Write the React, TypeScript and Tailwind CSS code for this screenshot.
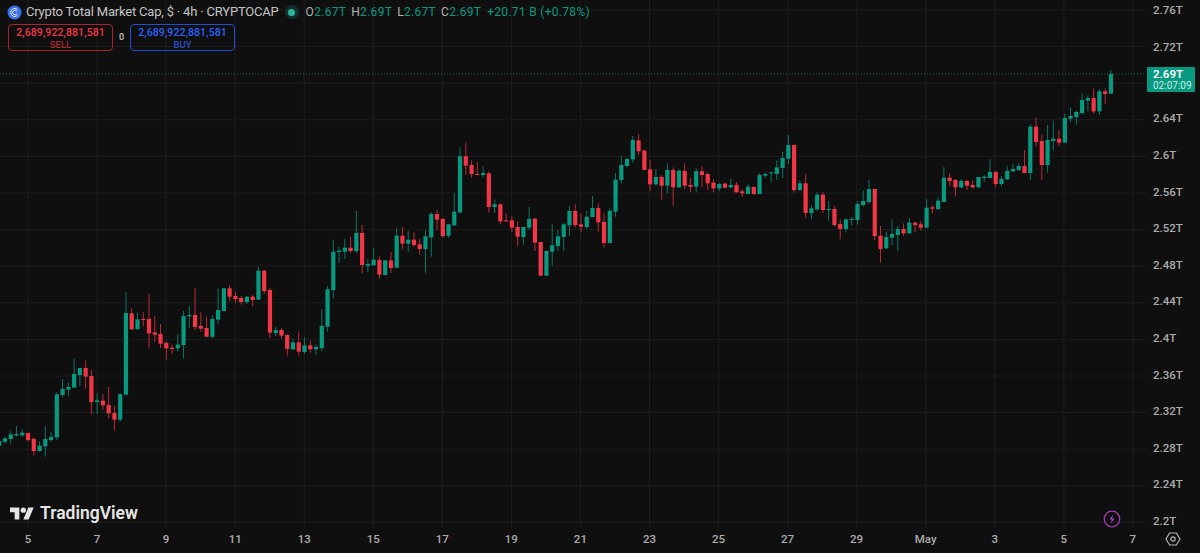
import React from 'react';

type Candle = [number, number, number, number, number]; // up, wick top, body top, body bottom, wick bottom

const G = 1;
const R = 0;

// values are measured at 3x, `top` is the y offset of each block
const blocks: { top: number; rows: Candle[] }[] = [
  {
    top: 280,
    rows: [
      [G, 478, 483, 497, 500], [G, 470, 475, 485, 491], [G, 453, 463, 477, 491], [G, 438, 462, 466, 470],
      [G, 448, 458, 466, 470], [R, 458, 459, 480, 485], [R, 472, 477, 513, 527], [G, 483, 497, 513, 515],
      [G, 438, 477, 499, 530], [G, 456, 471, 480, 486], [G, 337, 343, 472, 480], [G, 297, 327, 345, 352],
      [G, 307, 321, 329, 348], [G, 237, 282, 323, 323], [G, 264, 264, 285, 318], [R, 241, 264, 290, 326],
      [R, 270, 288, 366, 403], [G, 340, 361, 366, 402], [R, 342, 362, 376, 390], [R, 321, 375, 400, 414],
      [R, 378, 399, 419, 451], [G, 339, 343, 419, 425], [G, 36, 99, 344, 344], [R, 85, 100, 148, 149],
      [G, 97, 118, 148, 148], [R, 96, 117, 120, 140], [R, 42, 117, 160, 205], [R, 108, 157, 164, 186],
      [R, 132, 162, 191, 204], [R, 184, 189, 205, 239], [R, 195, 203, 207, 222], [G, 163, 194, 205, 215],
      [G, 93, 108, 195, 236], [G, 78, 105, 109, 143], [R, 25, 105, 141, 150],
    ],
  },
  {
    top: 200,
    rows: [
      [R, 337, 378, 386, 395], [R, 350, 384, 410, 411], [G, 345, 357, 410, 414], [G, 265, 330, 359, 371],
      [G, 264, 265, 333, 334], [R, 255, 265, 290, 303], [R, 275, 288, 297, 310], [R, 288, 294, 306, 314],
      [G, 288, 290, 306, 312], [R, 284, 290, 300, 318], [G, 201, 212, 299, 300], [R, 210, 212, 273, 282],
      [R, 264, 270, 398, 414], [G, 381, 390, 399, 408], [R, 384, 390, 407, 416], [R, 403, 405, 447, 467],
      [G, 416, 427, 448, 450], [R, 395, 427, 455, 467], [G, 412, 436, 456, 462], [R, 421, 436, 448, 458],
      [G, 433, 441, 448, 465], [G, 327, 378, 444, 453], [G, 258, 268, 380, 395], [G, 119, 155, 270, 294],
      [G, 140, 152, 156, 189], [G, 117, 143, 155, 177], [R, 111, 143, 153, 158], [G, 33, 99, 153, 159],
      [R, 75, 99, 195, 219], [G, 177, 192, 197, 216], [G, 145, 179, 196, 196], [R, 170, 180, 224, 237],
      [G, 180, 181, 225, 226], [R, 156, 181, 204, 219], [G, 85, 107, 203, 205],
    ],
  },
  {
    top: 130,
    rows: [
      [R, 291, 317, 341, 358], [G, 303, 329, 341, 365], [R, 307, 329, 345, 351], [R, 326, 343, 357, 375],
      [G, 300, 319, 357, 430], [G, 247, 252, 322, 380], [R, 240, 252, 269, 300], [R, 265, 267, 318, 323],
      [G, 281, 283, 317, 323], [G, 189, 245, 286, 287], [G, 52, 79, 247, 251], [R, 38, 79, 107, 134],
      [R, 91, 105, 132, 143], [R, 96, 132, 134, 135], [G, 110, 129, 135, 141], [R, 124, 130, 231, 247],
      [G, 208, 223, 231, 249], [R, 220, 223, 274, 283], [R, 250, 271, 274, 275], [R, 260, 271, 293, 306],
      [R, 274, 291, 320, 348], [G, 291, 291, 321, 344], [G, 231, 267, 293, 300], [R, 264, 266, 338, 363],
      [R, 336, 336, 437, 437], [G, 361, 363, 437, 437], [G, 283, 346, 365, 408], [G, 300, 319, 348, 363],
      [G, 280, 283, 321, 363], [G, 228, 243, 286, 318], [R, 223, 243, 285, 292], [R, 250, 283, 290, 307],
      [G, 243, 260, 291, 297], [G, 198, 234, 261, 262], [R, 220, 234, 277, 305],
      [R, 250, 276, 339, 353], [G, 235, 243, 339, 339], [G, 129, 149, 245, 260], [G, 77, 105, 150, 160],
      [G, 83, 87, 108, 112], [G, 18, 30, 88, 98], [R, 13, 31, 64, 76], [R, 58, 62, 120, 120],
      [R, 91, 118, 163, 182], [G, 117, 141, 163, 166], [R, 135, 141, 167, 209], [G, 100, 120, 167, 190],
      [R, 112, 120, 172, 228], [G, 118, 122, 172, 174], [R, 100, 123, 167, 177], [R, 144, 165, 170, 186],
      [G, 115, 124, 170, 188], [R, 108, 124, 135, 172], [R, 128, 132, 160, 180], [R, 148, 158, 175, 187],
      [G, 158, 162, 175, 184], [R, 158, 161, 173, 175], [G, 147, 165, 172, 174], [R, 156, 165, 187, 188],
      [R, 178, 184, 190, 201], [G, 163, 170, 192, 192], [R, 170, 171, 192, 195], [G, 130, 135, 192, 192],
      [G, 127, 132, 137, 143], [G, 125, 127, 130, 158], [G, 91, 112, 132, 150], [G, 65, 84, 114, 144],
      [G, 15, 45, 86, 103], [R, 43, 45, 180, 188],
      [G, 151, 160, 180, 183], [R, 132, 160, 249, 264], [G, 225, 235, 249, 267], [G, 187, 194, 238, 242],
      [R, 187, 194, 240, 249], [G, 213, 237, 240, 272], [R, 228, 237, 285, 290], [R, 268, 282, 297, 327],
      [G, 265, 268, 297, 306], [G, 262, 267, 270, 286], [G, 213, 222, 270, 284], [G, 182, 213, 225, 230],
      [G, 150, 177, 216, 221], [R, 177, 177, 318, 330], [R, 288, 317, 357, 398], [G, 305, 321, 355, 357],
      [G, 268, 312, 323, 345], [G, 287, 297, 315, 362], [R, 280, 297, 310, 318], [G, 264, 278, 310, 312],
      [R, 276, 278, 285, 307], [R, 274, 283, 293, 302], [G, 207, 233, 293, 293], [R, 226, 232, 236, 251],
      [G, 202, 212, 237, 240], [G, 111, 143, 216, 216], [R, 129, 143, 153, 168], [R, 147, 150, 172, 199],
      [G, 147, 153, 172, 174], [R, 150, 153, 167, 180], [R, 151, 165, 172, 175], [G, 141, 141, 172, 174],
    ],
  },
  {
    top: 60,
    rows: [
      [G, 345, 350, 354, 365], [G, 298, 336, 354, 354], [R, 332, 336, 372, 382], [G, 348, 357, 372, 378],
      [G, 318, 333, 358, 360], [G, 312, 327, 334, 336], [G, 310, 318, 330, 333], [R, 270, 318, 339, 340],
      [G, 193, 200, 339, 360], [R, 174, 200, 246, 260], [R, 224, 243, 315, 360], [G, 195, 240, 315, 338],
      [G, 183, 236, 243, 272], [R, 210, 236, 248, 258], [G, 160, 174, 248, 248], [G, 142, 168, 176, 186],
      [G, 152, 156, 171, 194], [G, 101, 120, 159, 164], [G, 105, 114, 122, 154], [R, 85, 114, 154, 161],
      [G, 87, 94, 154, 164], [R, 85, 94, 102, 132], [G, 30, 42, 101, 101],
    ],
  },
];

const candles = blocks.flatMap((b) =>
  b.rows.map(([up, wt, bt, bb, wb]) => ({
    up: up === G,
    wickTop: b.top + wt / 3,
    bodyTop: b.top + bt / 3,
    bodyBottom: b.top + bb / 3,
    wickBottom: b.top + wb / 3,
  })),
);

// 2.68T sits behind the last price tag, so its row stays empty
const prices = ['2.76T', '2.72T', '', '2.64T', '2.6T', '2.56T', '2.52T', '2.48T', '2.44T', '2.4T', '2.36T', '2.32T', '2.28T', '2.24T', '2.2T'];
const days = ['5', '7', '9', '11', '13', '15', '17', '19', '21', '23', '25', '27', '29', 'May', '3', '5', '7'];

function Chart() {
  return (
    <svg width="1146" height="528" className="block">
      {prices.map((p, k) => (
        <line key={k} x1="0" x2="1146" y1={10 + 36.6 * k} y2={10 + 36.6 * k} stroke="#1d1d1d" />
      ))}
      {days.map((d, k) => (
        <line key={k} y1="0" y2="528" x1={28 + 69.06 * k} x2={28 + 69.06 * k} stroke="#1d1d1d" />
      ))}
      <line x1="0" x2="1146" y1="74" y2="74" stroke="#089981" strokeDasharray="1 2" opacity="0.7" />
      {candles.map((c, k) => {
        const x = 5 + 5.76 * (k - 1);
        const fill = c.up ? '#089981' : '#f23645';
        return (
          <g key={k} fill={fill}>
            <rect x={x - 0.5} width="1" y={c.wickTop} height={c.wickBottom - c.wickTop} opacity="0.75" />
            <rect x={x - 2.1} width="4.2" y={c.bodyTop} height={Math.max(c.bodyBottom - c.bodyTop, 1)} />
          </g>
        );
      })}
    </svg>
  );
}

function OrderBox({ label, tone }: { label: string; tone: 'sell' | 'buy' }) {
  const sell = tone === 'sell';
  return (
    <div
      className={`flex h-[27px] w-[105px] flex-col items-center justify-center rounded-[4px] border ${
        sell ? 'border-[#a8232e]' : 'border-[#1d4ed0]'
      }`}
    >
      <span className={`text-[10.5px] leading-[13px] font-medium tracking-[0.1px] ${sell ? 'text-[#f23645]' : 'text-[#2962ff]'}`}>
        2,689,922,881,581
      </span>
      <span className={`text-[9.5px] leading-[11px] font-medium ${sell ? 'text-[#b0252f]' : 'text-[#2350c8]'}`}>{label}</span>
    </div>
  );
}

function Legend() {
  const ohlc = [
    ['O', '2.67T'],
    ['H', '2.69T'],
    ['L', '2.67T'],
    ['C', '2.69T'],
  ];
  return (
    <div className="absolute top-[4px] left-[7px] flex flex-col gap-[4px]">
      <div className="flex h-[16px] items-center">
        <svg width="15" height="15" viewBox="0 0 15 15" className="mr-[4px]">
          <circle cx="7.5" cy="7.5" r="7" fill="#3b6fe8" />
          <path d="M10.8 5a4 4 0 1 0 0 5M9.8 6.4a2.2 2.2 0 1 0 0 2.2" fill="none" stroke="#e8eefc" strokeWidth="1" />
        </svg>
        <span className="text-[13px] tracking-[-0.19px] text-[#c4c4c4]">Crypto Total Market Cap, $ · 4h · CRYPTOCAP</span>
        <span className="mx-[6px] flex h-[14px] w-[14px] items-center justify-center rounded-full bg-[#12302b]">
          <span className="h-[7px] w-[7px] rounded-full bg-[#2bb39b]" />
        </span>
        <div className="ml-[1px] flex gap-[5px] text-[12px] tracking-[0.3px]">
          {ohlc.map(([k, v]) => (
            <span key={k} className="text-[#089981]">
              <span className="text-[#b4b4b4]">{k}</span>
              {v}
            </span>
          ))}
          <span className="ml-[1px] text-[#089981]">+20.71 B (+0.78%)</span>
        </div>
      </div>
      <div className="ml-[1px] flex items-center">
        <OrderBox label="SELL" tone="sell" />
        <span className="w-[17px] text-center text-[9px] font-medium text-[#c4c4c4]">0</span>
        <OrderBox label="BUY" tone="buy" />
      </div>
    </div>
  );
}

function Logo() {
  return (
    <div className="absolute top-[503px] left-[10px] flex items-center gap-[6px]">
      <svg width="24" height="13" viewBox="0 4 36 18" fill="#e6e6e6">
        <path d="M14 22H7V11H0V4h14v18zM28 22h-8l7.5-18h8L28 22z" />
        <circle cx="20" cy="8" r="4" />
      </svg>
      <span className="text-[17.5px] leading-[20px] font-semibold text-[#e6e6e6]">TradingView</span>
    </div>
  );
}

export default function App() {
  return (
    <div className="flex h-[553px] w-[1200px] flex-col overflow-hidden bg-[#0f0f0f] font-['Roboto',sans-serif]">
      <div className="relative flex h-[528px]">
        <div className="w-[1146px]">
          <Chart />
        </div>
        <div className="flex w-[54px] flex-col gap-[22.6px] pt-[3px] pl-[7px] text-[11.5px] leading-[14px] font-medium text-[#ababab]">
          {prices.map((p, k) => (
            <span key={k} className="h-[14px]">
              {p}
            </span>
          ))}
        </div>

        <Legend />
        <Logo />

        {/* last price tag */}
        <div className="absolute top-[67px] left-[1147px] flex h-[25px] w-[48px] flex-col justify-center rounded-[1px] bg-[#089981] pl-[6px] leading-[12px]">
          <span className="text-[11.5px] font-semibold text-white">2.69T</span>
          <span className="text-[10px] text-[#c8ece5]">02:07:09</span>
        </div>

        {/* alert badge */}
        <svg width="18" height="18" viewBox="0 0 18 18" className="absolute top-[510px] left-[1103px]">
          <circle cx="9" cy="9" r="7.8" fill="none" stroke="#a13bb5" strokeWidth="1.3" />
          <path d="M10.2 4.6 6.2 9.6h2.6l-1 3.8 4-5h-2.6z" fill="#a13bb5" />
        </svg>
      </div>

      <div className="flex h-[25px]">
        <div className="w-[1146px] overflow-hidden">
          <div className="ml-[-6.5px] flex text-[11.5px] leading-[22px] font-medium text-[#ababab]">
            {days.map((d, k) => (
              <span key={k} className="w-[69.06px] shrink-0 text-center">
                {d}
              </span>
            ))}
          </div>
        </div>
        <div className="flex w-[54px] items-start justify-center pt-[3px]">
          <svg width="16" height="16" viewBox="0 0 16 16" fill="none" stroke="#b4b4b4" strokeWidth="1.2">
            <path d="M4.6 2h6.8L15 8l-3.6 6H4.6L1 8z" />
            <circle cx="8" cy="8" r="2.2" />
          </svg>
        </div>
      </div>
    </div>
  );
}
